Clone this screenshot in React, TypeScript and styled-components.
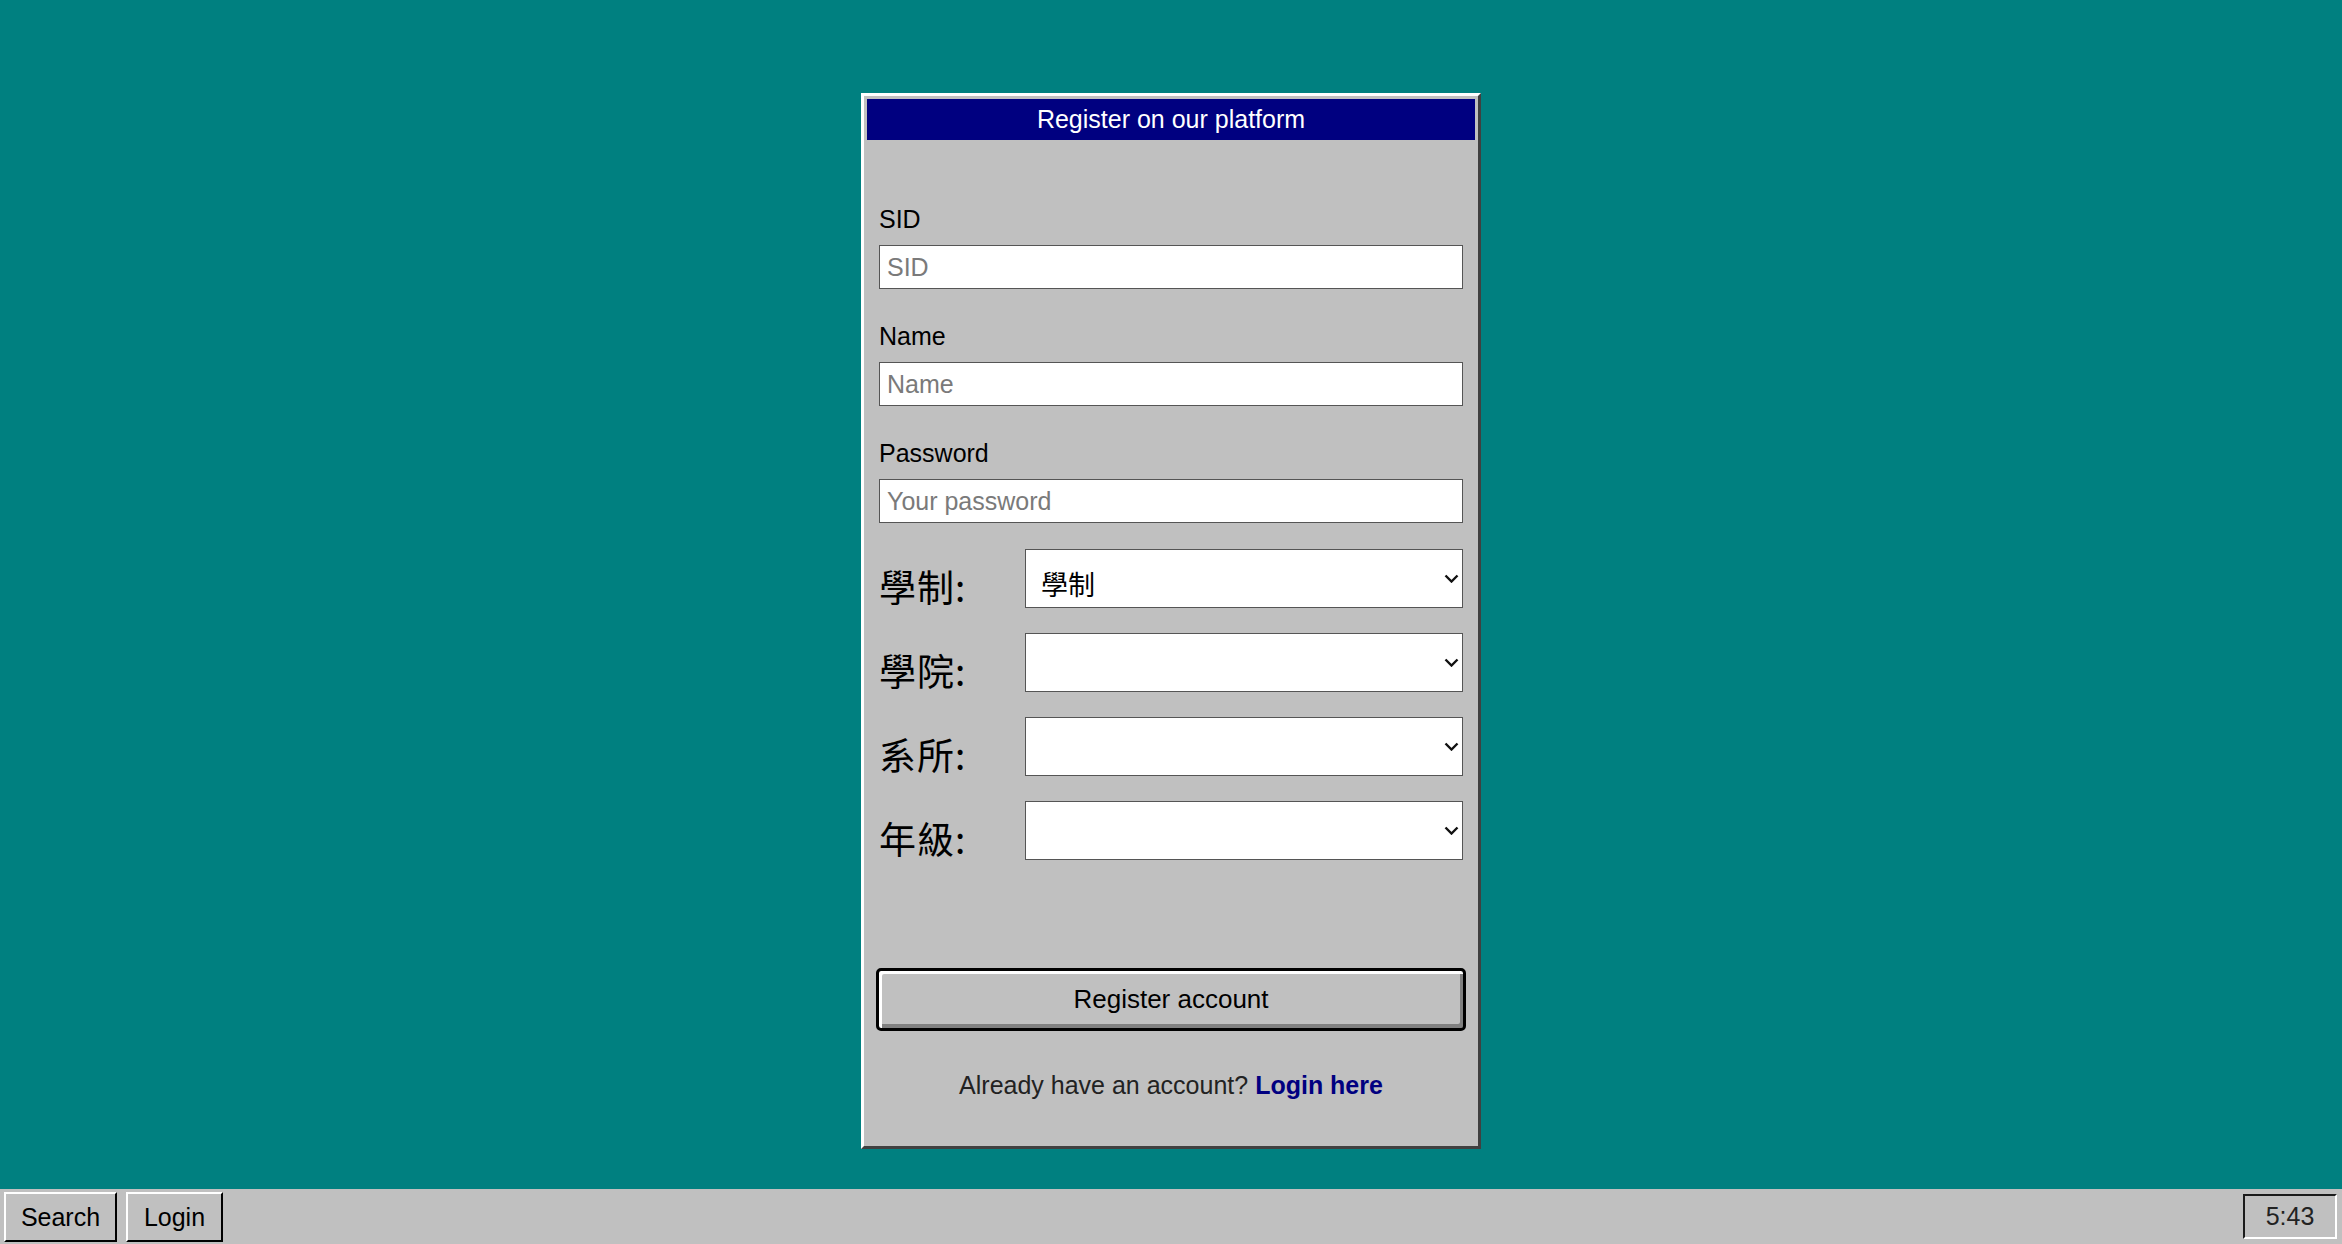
import React from "react";
import styled, { createGlobalStyle } from "styled-components";

const FONT = `"Liberation Sans", Arial, sans-serif`;
const CJK = `"Noto Sans CJK TC", "Noto Sans CJK SC", sans-serif`;

const GlobalStyle = createGlobalStyle`
  html, body { margin: 0; padding: 0; height: 100%; }
  body { background: #008080; font-family: ${FONT}; overflow: hidden; }
  #root { height: 100%; }
  *, *::before, *::after { box-sizing: border-box; }
`;

const Screen = styled.div`
  height: 100vh;
  display: flex;
  flex-direction: column;
`;

const Desktop = styled.main`
  flex: 1;
  display: flex;
  justify-content: center;
  align-items: flex-start;
  padding-top: 93px;
`;

const Window = styled.section`
  width: 620px;
  height: 1056px;
  background: #c0c0c0;
  border: 3px solid;
  border-color: #ffffff #404040 #404040 #ffffff;
  padding: 3px;
  display: flex;
  flex-direction: column;
`;

const TitleBar = styled.header`
  height: 41px;
  background: #000080;
  color: #ffffff;
  font-size: 25px;
  display: flex;
  align-items: center;
  justify-content: center;
`;

const Form = styled.form`
  display: flex;
  flex-direction: column;
  padding: 62px 12px 0;
`;

const Fields = styled.div`
  display: flex;
  flex-direction: column;
  gap: 30px;
`;

const Field = styled.label`
  display: flex;
  flex-direction: column;
  gap: 9px;
`;

const LabelText = styled.span`
  font-size: 25px;
  line-height: 34px;
  color: #000;
`;

const TextInput = styled.input`
  height: 44px;
  width: 100%;
  border: 1px solid #555555;
  background: #ffffff;
  padding: 0 7px;
  font-family: ${FONT};
  font-size: 25px;
  color: #000;
  outline: none;
  border-radius: 0;
  &::placeholder { color: #7a7a7a; }
`;

const Selects = styled.div`
  display: flex;
  flex-direction: column;
  gap: 25px;
  margin-top: 26px;
`;

const SelectRow = styled.div`
  display: grid;
  grid-template-columns: 146px 1fr;
  height: 59px;
`;

const CjkLabel = styled.span`
  font-family: ${CJK};
  font-size: 37px;
  line-height: 59px;
  padding-top: 8px;
  letter-spacing: 1px;
  color: #000;
`;

const SelectWrap = styled.div`
  position: relative;
`;

const Select = styled.select`
  appearance: none;
  -webkit-appearance: none;
  width: 100%;
  height: 59px;
  border: 1px solid #555555;
  border-radius: 0;
  background: #ffffff;
  padding: 10px 40px 0 15px;
  font-family: ${CJK};
  font-size: 27px;
  color: #000;
  outline: none;
`;

const Chevron = styled.svg`
  position: absolute;
  right: 4px;
  top: 25px;
  width: 15px;
  height: 9px;
  pointer-events: none;
`;

const SubmitButton = styled.button`
  margin: 108px -3px 0 -3px;
  height: 63px;
  border: 3px solid #000;
  border-radius: 5px;
  background: #c0c0c0;
  box-shadow: inset 3px 3px 0 #ffffff, inset -3px -4px 0 #808080;
  font-family: ${FONT};
  font-size: 26px;
  color: #000;
`;

const Footer = styled.p`
  margin: 37px 0 0;
  text-align: center;
  font-size: 25px;
  line-height: 34px;
  color: #222;
`;

const LoginLink = styled.a`
  color: #000080;
  font-weight: bold;
  text-decoration: none;
`;

const Taskbar = styled.footer`
  height: 55px;
  background: #c0c0c0;
  display: flex;
  align-items: flex-start;
  gap: 9px;
  padding: 3px 5px 0 4px;
`;

const TaskButton = styled.button<{ $width: number }>`
  width: ${(p) => p.$width}px;
  height: 50px;
  background: #c0c0c0;
  border: 2px solid;
  border-color: #ffffff #000000 #000000 #ffffff;
  font-family: ${FONT};
  font-size: 25px;
  color: #000;
  padding: 0;
`;

const Clock = styled.div`
  margin-left: auto;
  margin-top: 2px;
  width: 94px;
  height: 45px;
  border: 2px solid;
  border-color: #1a1a1a #ffffff #ffffff #1a1a1a;
  display: flex;
  align-items: center;
  justify-content: center;
  font-size: 25px;
  color: #222;
`;

const ChevronIcon = () => (
  <Chevron viewBox="0 0 15 9">
    <path d="M1.5 1.5 L7.5 7.5 L13.5 1.5" fill="none" stroke="#111" strokeWidth="2.4" />
  </Chevron>
);

const selects: { label: string; value?: string }[] = [
  { label: "學制", value: "學制" },
  { label: "學院" },
  { label: "系所" },
  { label: "年級" },
];

export default function App() {
  return (
    <>
      <GlobalStyle />
      <Screen>
        <Desktop>
          <Window>
            <TitleBar>Register on our platform</TitleBar>
            <Form onSubmit={(e) => e.preventDefault()}>
              <Fields>
                <Field>
                  <LabelText>SID</LabelText>
                  <TextInput placeholder="SID" />
                </Field>
                <Field>
                  <LabelText>Name</LabelText>
                  <TextInput placeholder="Name" />
                </Field>
                <Field>
                  <LabelText>Password</LabelText>
                  <TextInput type="password" placeholder="Your password" />
                </Field>
              </Fields>
              <Selects>
                {selects.map((s) => (
                  <SelectRow key={s.label}>
                    <CjkLabel>{s.label}:</CjkLabel>
                    <SelectWrap>
                      <Select defaultValue={s.value ?? ""}>
                        {s.value ? <option value={s.value}>{s.value}</option> : <option value="" />}
                      </Select>
                      <ChevronIcon />
                    </SelectWrap>
                  </SelectRow>
                ))}
              </Selects>
              <SubmitButton type="submit">Register account</SubmitButton>
              <Footer>
                Already have an account? <LoginLink href="#">Login here</LoginLink>
              </Footer>
            </Form>
          </Window>
        </Desktop>
        <Taskbar>
          <TaskButton $width={113}>Search</TaskButton>
          <TaskButton $width={97}>Login</TaskButton>
          <Clock>5:43</Clock>
        </Taskbar>
      </Screen>
    </>
  );
}
